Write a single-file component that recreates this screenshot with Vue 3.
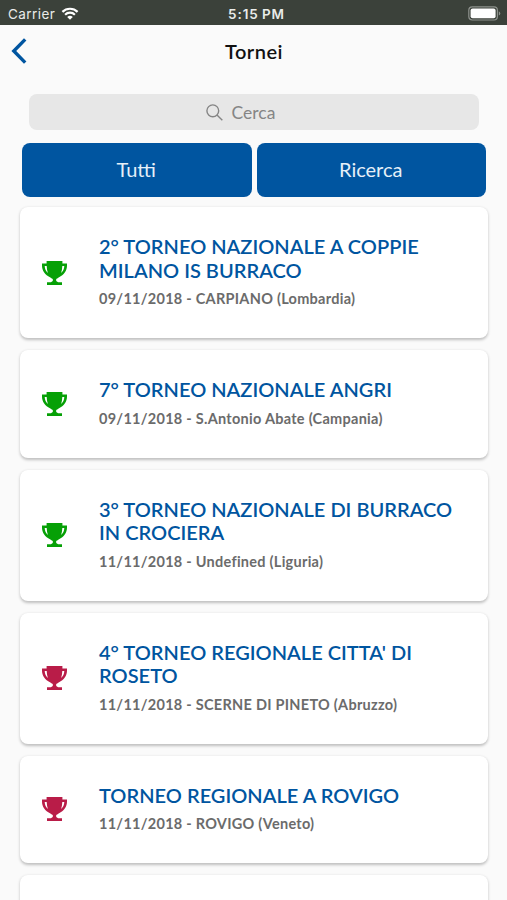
<template>
  <div class="screen">
    <div class="status-bar">
      <div class="status-left">
        <span class="carrier">Carrier</span>
        <svg class="wifi" viewBox="0 0 18 13">
          <path d="M1.4 4.9a10.8 10.8 0 0 1 15.2 0" />
          <path d="M4.1 7.7a7 7 0 0 1 9.8 0" />
          <path class="wifi-dot" d="M9 12.8 6.2 10a4 4 0 0 1 5.6 0z" />
        </svg>
      </div>
      <span class="clock">5:15 PM</span>
      <div class="status-right">
        <svg class="battery" viewBox="0 0 33 15">
          <rect class="battery-case" x="0.8" y="0.8" width="28.6" height="13.2" rx="3.4" />
          <rect class="battery-level" x="2.6" y="2.5" width="25" height="9.8" rx="2" />
          <path class="battery-cap" d="M30.8 5.2q1.5.7 1.5 2.2t-1.5 2.2z" />
        </svg>
      </div>
    </div>

    <header class="nav-bar">
      <button class="back" aria-label="Indietro">
        <svg viewBox="0 0 16 26">
          <path d="M14.2 1.4 2.8 13l11.4 11.6" />
        </svg>
      </button>
      <h1 class="nav-title">Tornei</h1>
      <span></span>
    </header>

    <div class="search">
      <svg class="search-icon" viewBox="0 0 17 17">
        <circle cx="6.8" cy="6.8" r="5.9" />
        <path d="M11 11l5.3 5.3" />
      </svg>
      <span class="search-label">Cerca</span>
    </div>

    <div class="tabs">
      <button
        v-for="tab in tabs"
        :key="tab"
        class="tab"
      >
        {{ tab }}
      </button>
    </div>

    <div class="list">
      <article v-for="item in tornei" :key="item.title" class="card">
        <svg class="trophy" :class="item.type" viewBox="0 0 25 24">
          <path
            fill-rule="evenodd"
            d="M4.6 0h15.8v2.6H25v2.200c0 5-3.200 9.200-8 11.400-1 .9-1.800 1.500-2.800 1.800v2l1.900 1.300h3.900V24H5v-2.700h3.900l1.900-1.300v-2c-1-.3-1.800-.9-2.800-1.800C3.200 14 0 9.800 0 4.800V2.600h4.600zM2.700 5c.1 2.900 1.200 5.200 3.200 6.900-.7-2-1.100-4.300-1.200-6.900zM20.300 5c-.1 2.600-.5 4.900-1.200 6.900 2-1.700 3.100-4 3.200-6.900z"
          />
        </svg>
        <div class="card-body">
          <h2 class="card-title">{{ item.title }}</h2>
          <p class="card-info">{{ item.date }} - {{ item.place }}</p>
        </div>
      </article>
      <div class="card card-next"></div>
    </div>
  </div>
</template>

<script setup>
import { ref } from 'vue'

const tabs = ['Tutti', 'Ricerca']

const tornei = ref([
  {
    title: '2° TORNEO NAZIONALE A COPPIE MILANO IS BURRACO',
    date: '09/11/2018',
    place: 'CARPIANO (Lombardia)',
    type: 'nazionale'
  },
  {
    title: '7° TORNEO NAZIONALE ANGRI',
    date: '09/11/2018',
    place: 'S.Antonio Abate (Campania)',
    type: 'nazionale'
  },
  {
    title: '3° TORNEO NAZIONALE DI BURRACO IN CROCIERA',
    date: '11/11/2018',
    place: 'Undefined (Liguria)',
    type: 'nazionale'
  },
  {
    title: "4° TORNEO REGIONALE CITTA' DI ROSETO",
    date: '11/11/2018',
    place: 'SCERNE DI PINETO (Abruzzo)',
    type: 'regionale'
  },
  {
    title: 'TORNEO REGIONALE A ROVIGO',
    date: '11/11/2018',
    place: 'ROVIGO (Veneto)',
    type: 'regionale'
  }
])
</script>

<style>
body {
  margin: 0;
  background: #fafafa;
}
</style>

<style scoped>
.screen {
  height: 900px;
  overflow: hidden;
  background: #fafafa;
  font-family: Lato, sans-serif;
  font-variant-ligatures: none;
}

.status-bar {
  display: grid;
  grid-template-columns: 1fr auto 1fr;
  align-items: center;
  height: 25px;
  padding: 2px 6px 0 8px;
  box-sizing: border-box;
  background: #3b413a;
  color: #e9ebe9;
  font-family: Inter, sans-serif;
  font-size: 13.5px;
}

.status-left {
  display: flex;
  align-items: center;
  gap: 6px;
}

.carrier {
  letter-spacing: 0.45px;
}

.wifi {
  width: 18px;
  height: 13px;
  fill: none;
  stroke: #fff;
  stroke-width: 2.2;
}

.wifi-dot {
  fill: #fff;
  stroke: none;
}

.clock {
  margin-left: 4px;
  font-weight: 600;
  letter-spacing: 0.9px;
  word-spacing: -1px;
}

.status-right {
  display: flex;
  justify-content: flex-end;
}

.battery {
  width: 33px;
  height: 15px;
}

.battery-case {
  fill: none;
  stroke: #8d918c;
  stroke-width: 1.2;
}

.battery-level {
  fill: #fff;
}

.battery-cap {
  fill: #8d918c;
}

.nav-bar {
  display: grid;
  grid-template-columns: 1fr auto 1fr;
  align-items: center;
  height: 52px;
  padding: 0 11px;
}

.back {
  display: flex;
  padding: 0;
  border: 0;
  background: none;
}

.back svg {
  width: 16px;
  height: 26px;
  fill: none;
  stroke: #0055a0;
  stroke-width: 3.4;
}

.nav-title {
  margin: 0 0 1px 1px;
  font-size: 20px;
  font-weight: 600;
  letter-spacing: 0.5px;
  color: #111;
}

.search {
  display: flex;
  align-items: center;
  justify-content: center;
  gap: 9px;
  height: 36px;
  margin: 17px 28px 0 29px;
  padding-right: 27px;
  box-sizing: border-box;
  border-radius: 8px;
  background: #e7e7e7;
  color: #858585;
  font-size: 17.5px;
}

.search-icon {
  width: 17px;
  height: 17px;
  fill: none;
  stroke: #858585;
  stroke-width: 1.4;
}

.tabs {
  display: flex;
  gap: 5px;
  margin: 13px 21px 0 22px;
}

.tab {
  flex: 1;
  height: 54px;
  padding: 0 1px 2px 0;
  border: 0;
  border-radius: 8px;
  background: #0055a0;
  color: #e6f0f8;
  font-family: inherit;
  font-size: 20px;
}

.list {
  display: flex;
  flex-direction: column;
  gap: 12px;
  margin: 10px 19px 0 20px;
}

.card {
  display: flex;
  align-items: center;
  padding: 28px 30px 28px 22px;
  border-radius: 8px;
  background: #fff;
  box-shadow: 0 1.5px 3px rgba(0, 0, 0, 0.24);
}

.card-next {
  height: 60px;
}

.trophy {
  flex: none;
  width: 25px;
  height: 24px;
  margin-right: 32px;
}

.nazionale {
  fill: #06a006;
}

.regionale {
  fill: #b91c48;
}

.card-title {
  margin: 0;
  color: #0055a0;
  font-size: 20px;
  font-weight: 600;
  letter-spacing: 0.02px;
  line-height: 23.5px;
}

.card-info {
  margin: 6px 0 0;
  color: #6b6b6b;
  font-size: 14.5px;
  font-weight: 700;
  letter-spacing: 0.27px;
  line-height: 22px;
}
</style>
